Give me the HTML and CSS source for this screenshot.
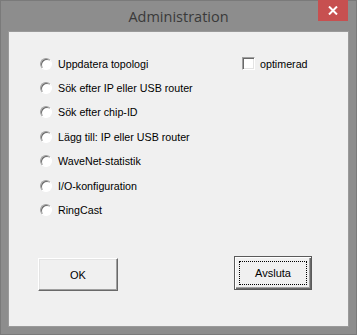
FILE: index.html
```
<!DOCTYPE html>
<html>
<head>
<meta charset="utf-8">
<link rel="stylesheet" href="styles.css">
</head>
<body>
<div class="window">
  <div class="titlebar">
    <span class="title">Administration</span>
    <div class="close"><svg width="10" height="9" viewBox="0 0 10 9"><path d="M1 0.5 L9 8.5 M9 0.5 L1 8.5" stroke="#fff" stroke-width="2"/></svg></div>
  </div>
  <div class="panel">
    <div class="top">
      <ul class="options">
        <li><span class="radio"></span>Uppdatera topologi</li>
        <li><span class="radio"></span>Sök efter IP eller USB router</li>
        <li><span class="radio"></span>Sök efter chip-ID</li>
        <li><span class="radio"></span>Lägg till: IP eller USB router</li>
        <li><span class="radio"></span>WaveNet-statistik</li>
        <li><span class="radio"></span>I/O-konfiguration</li>
        <li><span class="radio"></span>RingCast</li>
      </ul>
      <div class="check"><span class="box"></span>optimerad</div>
    </div>
    <div class="buttons">
      <div class="btn ok">OK</div>
      <div class="btn default"><span class="focus">Avsluta</span></div>
    </div>
  </div>
</div>
</body>
</html>
```
FILE: styles.css
```
html, body { margin: 0; padding: 0; }
body { width: 357px; height: 335px; overflow: hidden; font-family: "Liberation Sans", Arial, sans-serif; }
.window {
  width: 357px; height: 335px; box-sizing: border-box;
  background: #8d8d8d; border: 1px solid #7a7a7a;
  display: flex; flex-direction: column;
}
.titlebar {
  height: 30px; position: relative;
  display: flex; align-items: center; justify-content: center;
}
.title {
  font-family: "Open Sans", "Noto Sans", sans-serif; font-size: 14.5px; color: #3a3a3a;
}
.close {
  position: absolute; top: -1px; right: 8px; width: 30px; height: 21px;
  background: #c75050; display: flex; align-items: center; justify-content: center;
}
.panel {
  margin: 0 7px 0 7px; height: 296px; background: #f0f0f0;
  border: 1px solid #9a9a9a; box-sizing: border-box;
  font-size: 10.7px; color: #000;
}
.top { display: flex; padding: 19.5px 0 0 31px; }
.options { list-style: none; margin: 0; padding: 0; width: 202px; }
.options li { height: 24.4px; display: flex; align-items: center; }
.radio {
  width: 12px; height: 12px; border-radius: 50%; box-sizing: border-box;
  background: #fff; margin-right: 6px;
  border: 1px solid; border-color: #a0a0a0 #fff #fff #a0a0a0;
  box-shadow: inset 1px 1px 0 #696969;
}
.check { display: flex; align-items: center; height: 24px; }
.box {
  width: 13px; height: 13px; box-sizing: border-box; background: #fff;
  border: 1px solid; border-color: #a0a0a0 #fff #fff #a0a0a0;
  box-shadow: inset 1px 1px 0 #696969, inset -1px -1px 0 #e3e3e3;
  margin-right: 5px;
}
.buttons { display: flex; padding: 34px 0 0 29px; align-items: flex-start; }
.btn {
  box-sizing: border-box; display: flex; align-items: center; justify-content: center;
  background: #f0f0f0; font-size: 11px;
}
.ok {
  width: 80px; height: 33px; margin-top: 2px;
  border: 1px solid; border-color: #fff #696969 #696969 #fff;
  box-shadow: inset -1px -1px 0 #a0a0a0, inset 1px 1px 0 #e3e3e3;
}
.default {
  width: 78px; height: 34px; margin-left: 116px;
  border: 1px solid #5a5a5a;
  box-shadow: inset 1px 1px 0 #fff, inset -1px -1px 0 #696969, inset -2px -2px 0 #a0a0a0;
  padding: 4px;
}
.focus {
  flex: 1; align-self: stretch; display: flex; align-items: center; justify-content: center;
  border: 1px dotted #000;
}
```
